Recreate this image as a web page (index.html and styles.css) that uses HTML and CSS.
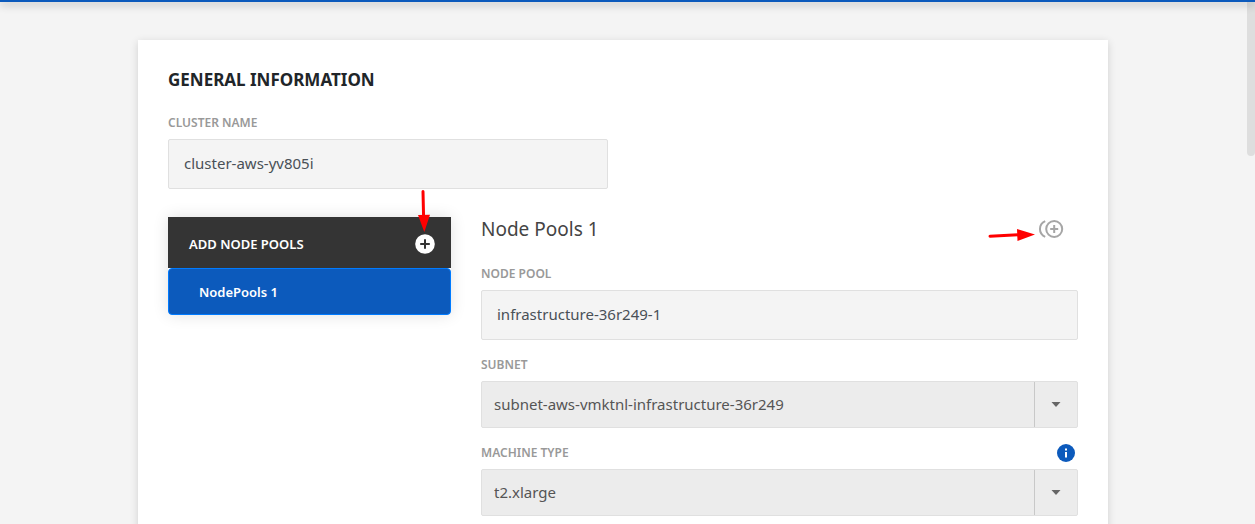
FILE: index.html
```html
<!DOCTYPE html>
<html lang="en">
<head>
<meta charset="utf-8">
<title>General Information</title>
<link rel="stylesheet" href="styles.css">
</head>
<body>
<header class="topbar"></header>
<main class="page">
  <div class="scroll-thumb"></div>
  <form class="card">
    <h1 class="card-title">GENERAL INFORMATION</h1>
    <div class="field cluster">
      <div class="label-row"><label for="cluster">CLUSTER NAME</label></div>
      <input class="text-box" id="cluster" type="text" value="cluster-aws-yv805i">
    </div>
    <div class="columns">
      <nav class="pools">
        <div class="pools-head">
          <span>ADD NODE POOLS</span>
          <button class="icon-button" type="button" aria-label="Add node pool">
            <svg width="20" height="20" viewBox="0 0 20 20"><circle cx="10" cy="10" r="9.8" fill="#fff"/><path d="M10 5.2v9.6M5.2 10h9.6" stroke="#343434" stroke-width="2"/></svg>
          </button>
          <svg class="arrow-down" width="14" height="42" viewBox="0 0 14 42"><path d="M6 1.5l.6 26" stroke="red" stroke-width="3" stroke-linecap="round"/><path d="M1 25l12-.3L7.3 42z" fill="red"/></svg>
        </div>
        <button class="pool-item" type="button">NodePools 1</button>
      </nav>
      <section class="details">
        <div class="details-head">
          <h2 class="details-title">Node Pools 1</h2>
          <button class="icon-button" type="button" aria-label="Duplicate node pool">
            <svg width="26" height="20" viewBox="0 0 26 20" fill="none" stroke="#a6a6a6" stroke-width="2"><circle cx="16.2" cy="10" r="8"/><path d="M16.2 6v8M12.2 10h8M7.2 2.2C.2 5.4.2 14.6 7.2 17.8"/></svg>
          </button>
          <svg class="arrow-right" width="48" height="14" viewBox="0 0 48 14"><path d="M2 8.2l30-1.5" stroke="red" stroke-width="3" stroke-linecap="round"/><path d="M29 1l18 5.5L29.5 13z" fill="red"/></svg>
        </div>
        <div class="field">
          <div class="label-row"><label for="pool">NODE POOL</label></div>
          <input class="text-box" id="pool" type="text" value="infrastructure-36r249-1">
        </div>
        <div class="field">
          <div class="label-row"><label for="subnet">SUBNET</label></div>
          <div class="select-wrap">
            <select class="select-box" id="subnet"><option>subnet-aws-vmktnl-infrastructure-36r249</option></select>
            <span class="select-arrow"><svg width="10" height="5" viewBox="0 0 10 5"><path d="M.5 0h9L5 5z" fill="#666"/></svg></span>
          </div>
        </div>
        <div class="field">
          <div class="label-row">
            <label for="machine">MACHINE TYPE</label>
            <button class="icon-button info" type="button" aria-label="Machine type information">
              <svg width="18" height="18" viewBox="0 0 18 18"><circle cx="9" cy="9" r="9" fill="#0c5abc"/><path d="M9 4.5v2M9 8v5.5" stroke="#fff" stroke-width="2"/></svg>
            </button>
          </div>
          <div class="select-wrap">
            <select class="select-box" id="machine"><option>t2.xlarge</option></select>
            <span class="select-arrow"><svg width="10" height="5" viewBox="0 0 10 5"><path d="M.5 0h9L5 5z" fill="#666"/></svg></span>
          </div>
        </div>
      </section>
    </div>
  </form>
</main>
</body>
</html>
```
FILE: styles.css
```css
* { box-sizing: border-box; }

body {
  margin: 0;
  height: 100vh;
  display: flex;
  flex-direction: column;
  overflow: hidden;
  background: #f4f4f4;
  color: #212529;
  font-family: "Noto Sans", sans-serif;
}

.topbar {
  flex: none;
  height: 2px;
  background: #0c5abc;
  box-shadow: 0 2px 8px rgba(0, 0, 0, 0.45);
  z-index: 1;
}

.page {
  position: relative;
  flex: 1;
  min-height: 0;
  padding: 38px 9px 0 0;
  overflow: hidden;
}

.scroll-thumb {
  position: absolute;
  top: 0;
  right: 0;
  width: 8px;
  height: 154px;
  border-radius: 0 0 4px 4px;
  background: #dedede;
}

.card {
  max-width: 970px;
  min-height: 100%;
  margin: 0 auto;
  padding: 30px;
  background: #fff;
  box-shadow: 0 2px 8px rgba(0, 0, 0, 0.15);
}

.card-title {
  margin: 0 0 24px;
  font-size: 17px;
  line-height: 20px;
  font-weight: 700;
}

.field + .field { margin-top: 16px; }

.cluster {
  max-width: 440px;
  margin-bottom: 28px;
}

.label-row {
  display: flex;
  align-items: center;
  justify-content: space-between;
  height: 18px;
  margin-bottom: 7px;
  color: #999;
  font-size: 12px;
  line-height: 18px;
  font-weight: 600;
}

.text-box,
.select-box {
  display: block;
  width: 100%;
  border: 1px solid #e0e0e0;
  border-radius: 2px;
  font-family: inherit;
  font-size: 15px;
  color: #495057;
  background: #f4f4f4;
}

.text-box {
  height: 50px;
  padding: 0 15px 2px;
}

.select-box {
  height: 47px;
  padding: 0 54px 2px 12px;
  appearance: none;
  color: #555;
  background: #ececec;
}

.select-wrap { position: relative; }

.select-arrow {
  position: absolute;
  top: 1px;
  right: 1px;
  bottom: 1px;
  width: 43px;
  display: flex;
  align-items: center;
  justify-content: center;
  border-left: 1px solid #c8c8c8;
  pointer-events: none;
}

.columns {
  display: grid;
  grid-template-columns: minmax(0, 283px) minmax(0, 1fr);
  gap: 30px;
  align-items: start;
}

.pools {
  border-radius: 0 0 4px 4px;
  box-shadow: 0 0 16px rgba(0, 0, 0, 0.12);
}

.pools-head {
  position: relative;
  display: flex;
  align-items: center;
  justify-content: space-between;
  height: 51px;
  padding: 2px 16px 0 21px;
  background: #343434;
  color: #fff;
  font-size: 13px;
  font-weight: 600;
}

.pool-item {
  display: block;
  width: 100%;
  height: 47px;
  padding: 0 30px;
  border: 1px solid #007bff;
  border-radius: 4px;
  background: #0c5abc;
  color: #fff;
  font-family: inherit;
  font-size: 13px;
  font-weight: 600;
  text-align: left;
}

.icon-button {
  display: flex;
  padding: 0;
  border: 0;
  background: none;
}

.info { margin-right: 3px; }

.arrow-down {
  position: absolute;
  top: -27px;
  right: 20px;
}

.details-head {
  position: relative;
  display: flex;
  align-items: center;
  justify-content: space-between;
  margin-bottom: 24px;
  padding-right: 14px;
}

.details-title {
  margin: 0;
  color: #444;
  font-size: 19px;
  line-height: 24px;
  font-weight: 400;
}

.arrow-right {
  position: absolute;
  top: 11px;
  right: 42px;
}
```
